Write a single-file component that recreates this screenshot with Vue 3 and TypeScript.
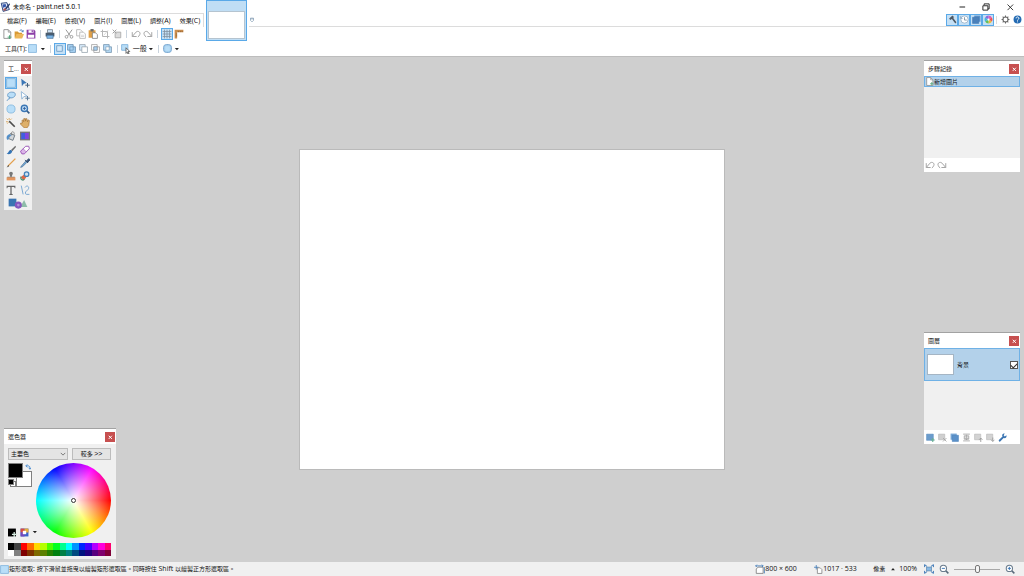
<script setup lang="ts">
import { ref } from 'vue'

interface IconButton {
  icon: string
  label: string
  active?: boolean
}

const blue = '#3b76b5'
const pale = '#b9def8'
const grey = '#a9a9a9'

const fileIcon = (stroke: string) =>
  `<path d="M3 1h7l4 4v10H3z" fill="#fff" stroke="${stroke}" stroke-width="1.4"/><path d="M10 1v4h4" fill="none" stroke="${stroke}" stroke-width="1.2"/>`

const icons: Record<string, string> = {
  app: `<path d="M2 2l9-1 4 11-10 3z" fill="#dfe6f4" stroke="#28427c" stroke-width="1.5"/><path d="M4 4l5-1 1 4-5 2z" fill="#3558ad"/><path d="M15 2L8 10l-2 4 4-2 6-8z" fill="#293a68"/><path d="M5 11l4-1 1 3-4 1z" fill="#b85a52"/>`,
  new: fileIcon('#8c8c8c') + `<path d="M12 10v6M9 13h6" stroke="#55a87c" stroke-width="1.6"/>`,
  open: `<path d="M1 14V4h5l2 2h5v3" fill="#d99a35"/><path d="M4 8h12l-3 7H1z" fill="#edb75a"/><path d="M9 3c2-3 5-1 5 1M12 3l2 2 1-3" fill="none" stroke="${blue}" stroke-width="1.4"/>`,
  save: `<path d="M1 1h12l2 2v12H1z" fill="#8d3fa8"/><path d="M4 2h8v4H4zM3 9h10v5H3z" fill="#fff"/><path d="M9 2h2v3H9z" fill="#8d3fa8"/>`,
  print: `<path d="M4 1h8v5H4z" fill="#cfe4f7" stroke="#55606c"/><path d="M1 6h14v6H1z" fill="#4a5b6d"/><path d="M3 10h10v5H3z" fill="#7cb5e6" stroke="#3e6a94"/>`,
  cut: `<path d="M3 1l7 10M13 1L6 11" stroke="#9b9b9b" stroke-width="1.6"/><g fill="none" stroke="#9b9b9b" stroke-width="1.5"><circle cx="4" cy="12.5" r="2.2"/><circle cx="12" cy="12.5" r="2.2"/></g>`,
  copy: `<g fill="#fff" stroke="#b3b3b3" stroke-width="1.3"><path d="M1 1h6l3 3v7H1z"/><path d="M6 5h6l3 3v7H6z"/></g><path d="M8 10h5M8 12h5" stroke="#c4c4c4"/>`,
  paste: `<path d="M1 2h11v12H1z" fill="#e0a047"/><path d="M4 0h5v4H4z" fill="#6b6b6b"/><path d="M7 6h5l3 3v6H7z" fill="#fff" stroke="#777" stroke-width="1.2"/>`,
  crop: `<path d="M4 1v11h11M1 4h11v11" fill="none" stroke="#b5b5b5" stroke-width="1.6"/><path d="M6 10l7-8" stroke="#c6c6c6"/>`,
  deselect: `<path d="M5 5h9v9H5z" fill="#ddd" stroke="${grey}" stroke-width="1.4"/><path d="M1 1l6 6M7 1L1 7" stroke="#a0a0a0" stroke-width="1.6"/>`,
  undo: `<path d="M2 5v7h7M2 12L8 5c3-3 8 0 6 4-1 2-2 3-3 4" fill="none" stroke="#a0a0a0" stroke-width="1.5"/>`,
  redo: `<path d="M14 5v7H7M14 12L8 5C5 2 0 5 2 9c1 2 2 3 3 4" fill="none" stroke="#a0a0a0" stroke-width="1.5"/>`,
  grid: `<path d="M4 1v14M8 1v14M12 1v14M1 4h14M1 8h14M1 12h14" stroke="#7f8f9e" stroke-width="1.2"/>`,
  ruler: `<path d="M1 1h14v4H5v10H1z" fill="#c98d4e"/><path d="M7 3v2M10 3v2M13 3v2M3 8h2M3 11h2" stroke="#7a4e22"/>`,
  rect: `<path d="M1 1h14v14H1z" fill="${pale}" stroke="#7fb2dc" stroke-width="1.4"/>`,
  replace: `<path d="M3 3h10v10H3z" fill="#d5e9f8" stroke="#6f9fc6" stroke-width="1.6"/>`,
  union: `<path d="M1 1h10v4h4v10H5v-4H1z" fill="#a9d3f4" stroke="#5f87aa" stroke-width="1.3"/><path d="M5 5h6v6H5z" fill="none" stroke="#5f87aa"/>`,
  exclude: `<path d="M1 1h10v10H1z" fill="#d5eafa" stroke="#929da8" stroke-width="1.3"/><path d="M5 5h10v10H5z" fill="#fff" stroke="#929da8" stroke-width="1.3"/>`,
  intersect: `<path d="M1 1h10v10H1zM5 5h10v10H5z" fill="none" stroke="#9a9a9a" stroke-width="1.3"/><path d="M5 5h6v6H5z" fill="#a9d3f4" stroke="#789"/>`,
  invert: `<path d="M1 1h10v4h4v10H5v-4H1z" fill="#b5dbf7" stroke="#7190aa" stroke-width="1.3"/><path d="M5 5h6v6H5z" fill="#fff" stroke="#7190aa"/>`,
  mode: `<path d="M1 1h10v9H1z" fill="${pale}" stroke="#7fb2dc" stroke-width="1.4"/><path d="M8 6l6 6h-3l2 3-2 1-1-3-2 2z" fill="#fff" stroke="#444" stroke-width="1.2"/>`,
  quality: `<rect x="1" y="1" width="14" height="14" rx="5" fill="${pale}" stroke="#6b9dca" stroke-width="1.5"/><path d="M3 3h10v10H3z" fill="none" stroke="#93bfe2"/>`,
  moveSel: `<path d="M2 1l9 7-5 1-3 4z" fill="${blue}"/><path d="M12 8v7M8.5 11.5h7" stroke="#46627f" stroke-width="1.6"/>`,
  lasso: `<path d="M3 9C1 4 6 1 11 2c5 0 5 6 1 8-3 2-6 1-8-1M4 9c3 0 3 4 0 4-2 1-2 2-2 3" fill="${pale}" stroke="#6d9cc5" stroke-width="1.5"/>`,
  movePx: `<path d="M2 1l9 7-5 1-3 4z" fill="#fff" stroke="#7aa5cf" stroke-width="1.2"/><path d="M12 8v7M8.5 11.5h7" stroke="#607e9b" stroke-width="1.6"/>`,
  ellipse: `<circle cx="8" cy="8" r="6.5" fill="${pale}" stroke="#83b6dd" stroke-width="1.3"/>`,
  zoom: `<circle cx="7" cy="7" r="5" fill="#c7e2f7" stroke="${blue}" stroke-width="2.2"/><path d="M11 11l4 4" stroke="#355c88" stroke-width="2.6"/><path d="M7 4.5v5M4.5 7h5" stroke="#28599b" stroke-width="1.4"/>`,
  wand: `<path d="M5 5l9 9" stroke="#4e4e4e" stroke-width="2.6"/><path d="M5 0v3M1 1l2 2M0 6h3M9 1L7 3M2 9l2-2" stroke="#d9a04c" stroke-width="1.4"/>`,
  hand: `<path d="M4 8L3 4l2-1 1 3V1h2l1 4V1h2l1 5 1-3 2 1-1 8-3 4H7L1 10V8z" fill="#deb06a" stroke="#9f6b2d" stroke-width="1"/>`,
  bucket: `<path d="M7 4l7 3-3 8-7-3z" fill="#d2d6da" stroke="#66727d" stroke-width="1.4"/><path d="M2 14C0 10 1 6 6 5l3 3c-4 0-5 2-5 6z" fill="#528fca"/><path d="M9 7V2c2-2 5 0 4 4" fill="none" stroke="#666"/>`,
  gradient: `<path d="M0 1h16v14H0z" fill="#777"/><path d="M2 3h6v10H2z" fill="#405ee0"/><path d="M8 3h6v10H8z" fill="#8144df"/>`,
  brush: `<path d="M15 1L8 8l2 2 6-7z" fill="#6d6d6d"/><path d="M8 8c-4 0-3 4-7 6 4 2 8 0 9-4z" fill="#3474b5"/>`,
  eraser: `<path d="M9 2h5l1 4-8 8H3l-2-4z" fill="#fff" stroke="#9953b5" stroke-width="1.5"/><path d="M5 6l5 5-3 3H3l-2-4z" fill="#dbb5e9" stroke="#9953b5"/>`,
  pencil: `<path d="M15 1L3 13" stroke="#e3a04e" stroke-width="2.2"/><path d="M4 11l-3 4 4-2z" fill="#444"/>`,
  picker: `<path d="M9 5L2 13l-1 2 3-1 7-7z" fill="#72a6d4" stroke="#456c91"/><path d="M8 3l5 5M10 5l4-4 2 2-4 4z" fill="#344f70" stroke="#344f70" stroke-width="1.6"/>`,
  stamp: `<path d="M5 4a3 3 0 116 0L9 9h5v3H2V9h5z" fill="#777"/><path d="M1 10h14v5H1z" fill="#e3965f"/>`,
  recolor: `<path d="M1 10l5-4 4 4-4 5z" fill="#dd6848"/><path d="M2 9a3 3 0 105 4" fill="none" stroke="#4a9274" stroke-width="2"/><circle cx="10.5" cy="5" r="3.6" fill="#cfe3f3" stroke="#4383ba" stroke-width="2"/>`,
  text: `<path d="M1 1h14v4h-1l-1-2H9v11l2 1v1H5v-1l2-1V3H3L2 5H1z" fill="#666"/>`,
  line: `<path d="M2 1l3 14M8 4c3-5 8-1 5 3l-4 4c-1 3 0 4 2 4h4" fill="none" stroke="#76a5d1" stroke-width="1.5"/>`,
  shapes: `<path d="M1 1h12v12H1z" fill="#3a75b2"/><path d="M25 3l5 11H19z" fill="#8ebca9"/><circle cx="16" cy="11" r="5.5" fill="#8656bd"/><circle cx="16" cy="11" r="2" fill="#b293d9"/>`,
  hammer: `<path d="M2 6l6-5 3 3-2 1 6 8-2 2-6-8-3 2z" fill="#4d5965"/>`,
  clock: `<circle cx="8" cy="8" r="6.5" fill="#fff" stroke="#92acc4" stroke-width="1.4"/><path d="M8 4v5h4" fill="none" stroke="#6b8296" stroke-width="1.4"/><path d="M1 2v4h4" fill="none" stroke="#7b98b2"/>`,
  layers: `<path d="M4 1h11v11H4z" fill="#5b91c9"/><path d="M1 4h11v11H1z" fill="#4a80ba" stroke="#4176ae"/>`,
  duplicate: `<path d="M1 1h11v11H1z" fill="#7ba9d6"/><path d="M4 4h11v11H4z" fill="#5b91c9" stroke="#4a80ba"/>`,
  palette: `<path d="M8 8V1a7 7 0 016 3.5z" fill="#e45ab7"/><path d="M8 8l6-3.5a7 7 0 010 7z" fill="#ee5555"/><path d="M8 8l6 3.5A7 7 0 018 15z" fill="#f0bb3c"/><path d="M8 8v7a7 7 0 01-6-3.5z" fill="#66bf58"/><path d="M8 8l-6 3.5a7 7 0 010-7z" fill="#46b6d8"/><path d="M8 8L2 4.5A7 7 0 018 1z" fill="#876be0"/><circle cx="8" cy="8" r="2" fill="#fff"/>`,
  gear: `<circle cx="8" cy="8" r="4.5" fill="none" stroke="#666" stroke-width="1.8"/><path d="M8 1v3M8 12v3M1 8h3M12 8h3M3 3l2 2M11 11l2 2M3 13l2-2M11 5l2-2" stroke="#666" stroke-width="1.8"/>`,
  help: `<circle cx="8" cy="8" r="7" fill="#246bb3"/><path d="M5.5 6c0-4 5-3 5 0 0 2-2.5 1.5-2.5 4M8 11.5V13" fill="none" stroke="#fff" stroke-width="1.7"/>`,
  minimize: `<path d="M4 8h9" stroke="#222" stroke-width="1.6"/>`,
  restore: `<path d="M3 6h8v7H3z" fill="none" stroke="#222" stroke-width="1.5"/><path d="M5 5V3h8v8h-2" fill="none" stroke="#222" stroke-width="1.5"/>`,
  close: `<path d="M4 4l9 9M13 4l-9 9" stroke="#222" stroke-width="1.4"/>`,
  closeSmall: `<path d="M6 6l5 5M11 6l-5 5" stroke="#fff" stroke-width="1.6"/>`,
  caret: `<path d="M2 5h11l-5 6z" fill="#222"/>`,
  caretUp: `<path d="M3 11h10L8 5z" fill="#222"/>`,
  listCaret: `<path d="M4 3h8v6l-4 4-4-4z" fill="#fff" stroke="#7893ad" stroke-width="1.8"/><path d="M4 5h8" stroke="#7893ad" stroke-width="1.8"/>`,
  chevron: `<path d="M2 5l6 6 6-6" fill="none" stroke="#555" stroke-width="2"/>`,
  swap: `<path d="M3 5h6c3 0 4 2 4 7M6 1L2 5l4 4M10 10l3 4 3-4" fill="none" stroke="#3f86cf" stroke-width="2.4"/>`,
  addColor: `<path d="M0 1h14v14H0z" fill="#000"/><path d="M11 7v9M7 11.5h9" stroke="#d9eee3" stroke-width="2.2"/>`,
  paletteMenu: `<path d="M1 1h14v14H1z" fill="#3c62cb"/><path d="M1 1h7v7H1z" fill="#d94c42"/><path d="M8 1h7v7H8z" fill="#e7ad38"/><path d="M1 8h7v7H1z" fill="#7648bb"/><path d="M5 5h6v6H5z" fill="#fff"/>`,
  layerAdd: `<path d="M1 2h12v11H1z" fill="#6b9ccc" stroke="#5a8dc0"/><path d="M12 9v7M8.5 12.5h7" stroke="#69b094" stroke-width="2"/>`,
  layerDelete: `<path d="M1 2h11v10H1z" fill="#cfcfcf" stroke="#b4b4b4"/><path d="M9 9l6 6M15 9l-6 6" stroke="#a2a2a2" stroke-width="1.5"/>`,
  layerMerge: `<path d="M2 2h12M2 14h12M4 5h8v6H4z" fill="#ddd" stroke="#adadad" stroke-width="1.7"/><path d="M8 3v9M5 9l3 3 3-3" fill="none" stroke="#999"/>`,
  layerUp: `<path d="M1 2h11v10H1z" fill="#d3d3d3" stroke="#b4b4b4"/><path d="M12 16V9M9 12l3-3 3 3" fill="none" stroke="#999" stroke-width="1.5"/>`,
  layerDown: `<path d="M1 2h11v10H1z" fill="#d3d3d3" stroke="#b4b4b4"/><path d="M12 8v7M9 12l3 3 3-3" fill="none" stroke="#999" stroke-width="1.5"/>`,
  wrench: `<path d="M15 4l-3 2-2-2 2-3C9 0 6 3 8 6l-7 7 2 3 7-7c4 1 6-2 5-5z" fill="#3b75b2"/>`,
  imageSize: `<path d="M5 5h8v10H2V8z" fill="#fff" stroke="#777" stroke-width="1.3"/><path d="M1 3h12M3 1L1 3l2 2M11 1l2 2-2 2M15 5v10" fill="none" stroke="${blue}" stroke-width="1.3"/>`,
  cursorPos: `<path d="M6 5h5l3 3v7H6z" fill="#fff" stroke="#777" stroke-width="1.3"/><path d="M4 0v8M0 4h8" stroke="${blue}" stroke-width="1.4"/>`,
  fit: `<path d="M4 5h8v6H4z" fill="#88b9e3" stroke="#4c7dab"/><path d="M1 5V1l4 3M15 5V1l-4 3M1 11v4l4-3M15 11v4l-4-3" fill="none" stroke="${blue}" stroke-width="1.6"/>`,
  zoomOut: `<circle cx="7" cy="7" r="5" fill="#fff" stroke="#697b8c" stroke-width="1.7"/><path d="M11 11l4 4" stroke="#596a7a" stroke-width="2.3"/><path d="M4.5 7h5" stroke="${blue}" stroke-width="1.5"/>`,
  zoomIn: `<circle cx="7" cy="7" r="5" fill="#fff" stroke="#697b8c" stroke-width="1.7"/><path d="M11 11l4 4" stroke="#596a7a" stroke-width="2.3"/><path d="M4.5 7h5M7 4.5v5" stroke="${blue}" stroke-width="1.5"/>`,
  historyNew: fileIcon('#8c8c8c') + `<path d="M12 9v6M9 12h6" stroke="#55a87c" stroke-width="1.5"/>`,
}

const menus = [
  { name: '檔案', key: 'F' },
  { name: '編輯', key: 'E' },
  { name: '檢視', key: 'V' },
  { name: '圖片', key: 'I' },
  { name: '圖層', key: 'L' },
  { name: '調整', key: 'A' },
  { name: '效果', key: 'C' },
]

const toolbarGroups: IconButton[][] = [
  [
    { icon: 'new', label: '新增' },
    { icon: 'open', label: '開啟' },
    { icon: 'save', label: '儲存' },
  ],
  [{ icon: 'print', label: '列印' }],
  [
    { icon: 'cut', label: '剪下' },
    { icon: 'copy', label: '複製' },
    { icon: 'paste', label: '貼上' },
    { icon: 'crop', label: '裁剪' },
    { icon: 'deselect', label: '取消選取' },
  ],
  [
    { icon: 'undo', label: '復原' },
    { icon: 'redo', label: '重做' },
  ],
  [
    { icon: 'grid', label: '格線', active: true },
    { icon: 'ruler', label: '尺規' },
  ],
]

const selectionModes: IconButton[] = [
  { icon: 'replace', label: '取代', active: true },
  { icon: 'union', label: '加入' },
  { icon: 'exclude', label: '減去' },
  { icon: 'intersect', label: '交集' },
  { icon: 'invert', label: '反轉' },
]

const windowToggles: IconButton[] = [
  { icon: 'hammer', label: '工具' },
  { icon: 'clock', label: '步驟記錄' },
  { icon: 'layers', label: '圖層' },
  { icon: 'palette', label: '選色器' },
]

const tools: IconButton[] = [
  { icon: 'rect', label: '矩形選取' },
  { icon: 'moveSel', label: '移動像素' },
  { icon: 'lasso', label: '套索選取' },
  { icon: 'movePx', label: '移動選取' },
  { icon: 'ellipse', label: '橢圓選取' },
  { icon: 'zoom', label: '縮放' },
  { icon: 'wand', label: '魔術棒' },
  { icon: 'hand', label: '平移' },
  { icon: 'bucket', label: '油漆桶' },
  { icon: 'gradient', label: '漸層' },
  { icon: 'brush', label: '筆刷' },
  { icon: 'eraser', label: '橡皮擦' },
  { icon: 'pencil', label: '鉛筆' },
  { icon: 'picker', label: '滴管' },
  { icon: 'stamp', label: '仿製印章' },
  { icon: 'recolor', label: '重新著色' },
  { icon: 'text', label: '文字' },
  { icon: 'line', label: '線條' },
]
const activeTool = ref('rect')

const layerActions: IconButton[] = [
  { icon: 'layerAdd', label: '新增圖層' },
  { icon: 'layerDelete', label: '刪除圖層' },
  { icon: 'duplicate', label: '複製圖層' },
  { icon: 'layerMerge', label: '向下合併' },
  { icon: 'layerUp', label: '上移' },
  { icon: 'layerDown', label: '下移' },
  { icon: 'wrench', label: '圖層屬性' },
]

const swatches = [
  '#000000', '#404040', '#ff0000', '#ff6a00', '#ffd800', '#b6ff00', '#4cff00', '#00ff21',
  '#00ff90', '#00ffff', '#0094ff', '#0026ff', '#4800ff', '#b200ff', '#ff00dc', '#ff006e',
  '#ffffff', '#808080', '#7f0000', '#7f3300', '#7f6a00', '#5b7f00', '#267f00', '#007f0e',
  '#007f46', '#007f7f', '#004a7f', '#00137f', '#21007f', '#57007f', '#7f006e', '#7f0037',
]

const layerVisible = ref(true)
const zoomLevel = ref(50)
const colorTarget = ref('primary')
</script>

<template>
  <div class="app" lang="zh-Hant">
    <header class="top">
      <div class="title">
        <svg class="icon" viewBox="0 0 16 16" v-html="icons.app" />
        <h1>未命名<span> - paint.net 5.0.1</span></h1>
      </div>
      <nav class="menu">
        <button v-for="m in menus" :key="m.key" type="button">{{ m.name }}<span>({{ m.key }})</span></button>
      </nav>
      <div class="toolbar">
        <div v-for="(group, g) in toolbarGroups" :key="g" class="group">
          <button v-for="b in group" :key="b.icon" type="button" class="tool" :class="{ active: b.active }" :aria-label="b.label">
            <svg class="icon" viewBox="0 0 16 16" v-html="icons[b.icon]" />
          </button>
        </div>
      </div>
      <button type="button" class="doc-thumb" aria-label="未命名"><span /></button>
      <div class="window-buttons">
        <button type="button" aria-label="最小化"><svg class="icon" viewBox="0 0 16 16" v-html="icons.minimize" /></button>
        <button type="button" aria-label="還原"><svg class="icon" viewBox="0 0 16 16" v-html="icons.restore" /></button>
        <button type="button" aria-label="關閉"><svg class="icon" viewBox="0 0 16 16" v-html="icons.close" /></button>
      </div>
      <div class="right-menu">
        <button type="button" class="list-caret" aria-label="圖片清單"><svg class="icon mini" viewBox="0 0 16 16" v-html="icons.listCaret" /></button>
        <button v-for="b in windowToggles" :key="b.icon" type="button" class="tool active" :aria-label="b.label">
          <svg class="icon small" viewBox="0 0 16 16" v-html="icons[b.icon]" />
        </button>
        <span class="divider" />
        <button type="button" class="tool" aria-label="設定"><svg class="icon small" viewBox="0 0 16 16" v-html="icons.gear" /></button>
        <button type="button" class="tool" aria-label="說明"><svg class="icon small" viewBox="0 0 16 16" v-html="icons.help" /></button>
      </div>
    </header>

    <div class="options">
      <span class="options-label">工具<span>(T):</span></span>
      <button type="button" class="tool" aria-label="矩形選取"><svg class="icon small" viewBox="0 0 16 16" v-html="icons.rect" /></button>
      <svg class="icon mini caret" viewBox="0 0 16 16" v-html="icons.caret" />
      <div class="group">
        <button v-for="b in selectionModes" :key="b.icon" type="button" class="tool" :class="{ active: b.active }" :aria-label="b.label">
          <svg class="icon small" viewBox="0 0 16 16" v-html="icons[b.icon]" />
        </button>
      </div>
      <div class="group">
        <button type="button" class="mode"><svg class="icon" viewBox="0 0 16 16" v-html="icons.mode" />一般</button>
        <svg class="icon mini caret" viewBox="0 0 16 16" v-html="icons.caret" />
      </div>
      <div class="group">
        <button type="button" class="tool" aria-label="品質"><svg class="icon small" viewBox="0 0 16 16" v-html="icons.quality" /></button>
        <svg class="icon mini" viewBox="0 0 16 16" v-html="icons.caret" />
      </div>
    </div>

    <main class="workspace">
      <div class="canvas" />

      <section class="panel tools-panel" aria-label="工具">
        <div class="panel-head">
          <h2>工...</h2>
          <button type="button" class="close" aria-label="關閉"><svg class="icon" viewBox="0 0 16 16" v-html="icons.closeSmall" /></button>
        </div>
        <div class="tool-grid">
          <button v-for="t in tools" :key="t.icon" type="button" class="tool" :class="{ active: activeTool === t.icon }" :aria-label="t.label" @click="activeTool = t.icon">
            <svg class="icon" viewBox="0 0 16 16" v-html="icons[t.icon]" />
          </button>
          <button type="button" class="tool wide" aria-label="圖形"><svg viewBox="0 0 31 17" v-html="icons.shapes" /></button>
        </div>
      </section>

      <section class="panel history-panel" aria-label="步驟記錄">
        <div class="panel-head">
          <h2>步驟記錄</h2>
          <button type="button" class="close" aria-label="關閉"><svg class="icon" viewBox="0 0 16 16" v-html="icons.closeSmall" /></button>
        </div>
        <ul class="list">
          <li class="history-item"><svg class="icon small" viewBox="0 0 16 16" v-html="icons.historyNew" />新增圖片</li>
        </ul>
        <div class="panel-foot">
          <button type="button" class="tool" aria-label="復原"><svg class="icon" viewBox="0 0 16 16" v-html="icons.undo" /></button>
          <button type="button" class="tool" aria-label="重做"><svg class="icon" viewBox="0 0 16 16" v-html="icons.redo" /></button>
        </div>
      </section>

      <section class="panel layers-panel" aria-label="圖層">
        <div class="panel-head">
          <h2>圖層</h2>
          <button type="button" class="close" aria-label="關閉"><svg class="icon" viewBox="0 0 16 16" v-html="icons.closeSmall" /></button>
        </div>
        <ul class="list">
          <li class="layer-item">
            <span class="layer-thumb" />
            <label for="layer-visible">背景</label>
            <input id="layer-visible" v-model="layerVisible" type="checkbox">
          </li>
        </ul>
        <div class="panel-foot">
          <button v-for="b in layerActions" :key="b.icon" type="button" class="tool" :aria-label="b.label">
            <svg class="icon small" viewBox="0 0 16 16" v-html="icons[b.icon]" />
          </button>
        </div>
      </section>

      <section class="panel colors-panel" aria-label="選色器">
        <div class="panel-head">
          <h2>選色器</h2>
          <button type="button" class="close" aria-label="關閉"><svg class="icon" viewBox="0 0 16 16" v-html="icons.closeSmall" /></button>
        </div>
        <div class="colors-body">
          <div class="colors-top">
            <div class="select-wrap">
              <select v-model="colorTarget" aria-label="色彩">
                <option value="primary">主要色</option>
                <option value="secondary">次要色</option>
              </select>
              <svg class="icon mini select-arrow" viewBox="0 0 16 16" v-html="icons.chevron" />
            </div>
            <button type="button" class="more">較多 <span>&gt;&gt;</span></button>
          </div>
          <div class="colors-mid">
            <div class="colors-side">
              <div class="pair">
                <span class="chip secondary" />
                <span class="chip primary" />
                <span class="chip reset-back" />
                <span class="chip reset-front" />
                <svg class="icon mini swap" viewBox="0 0 16 16" v-html="icons.swap" />
              </div>
              <div class="palette-actions">
                <button type="button" class="tool" aria-label="新增色彩"><svg class="icon small" viewBox="0 0 16 16" v-html="icons.addColor" /></button>
                <button type="button" class="tool" aria-label="調色盤"><svg class="icon small" viewBox="0 0 16 16" v-html="icons.paletteMenu" /></button>
                <svg class="icon mini" viewBox="0 0 16 16" v-html="icons.caret" />
              </div>
            </div>
            <div class="wheel"><span class="wheel-pointer" /></div>
          </div>
          <div class="palette">
            <button v-for="c in swatches" :key="c" type="button" :style="{ backgroundColor: c }" :aria-label="c" />
          </div>
        </div>
      </section>
    </main>

    <footer class="status">
      <svg class="icon small" viewBox="0 0 16 16" v-html="icons.rect" />
      <p class="hint">矩形選取<span>: </span>按下滑鼠並拖曳以繪製矩形選取區。同時按住<span> Shift </span>以繪製正方形選取區。</p>
      <div class="stat"><svg class="icon" viewBox="0 0 16 16" v-html="icons.imageSize" />800 × 600</div>
      <div class="stat"><svg class="icon small" viewBox="0 0 16 16" v-html="icons.cursorPos" />1017 · 533</div>
      <button type="button" class="unit">像素<svg class="icon mini" viewBox="0 0 16 16" v-html="icons.caretUp" /></button>
      <span class="percent">100%</span>
      <button type="button" class="tool fit" aria-label="符合視窗"><svg class="icon" viewBox="0 0 16 16" v-html="icons.fit" /></button>
      <button type="button" class="tool" aria-label="縮小"><svg class="icon" viewBox="0 0 16 16" v-html="icons.zoomOut" /></button>
      <input v-model="zoomLevel" type="range" min="0" max="100" aria-label="縮放">
      <button type="button" class="tool" aria-label="放大"><svg class="icon" viewBox="0 0 16 16" v-html="icons.zoomIn" /></button>
    </footer>
  </div>
</template>

<style>
body {
  margin: 0;
}
</style>

<style scoped>
* {
  box-sizing: border-box;
}

.app {
  display: flex;
  flex-direction: column;
  height: 100vh;
  overflow: hidden;
  background: #cfcfcf;
  color: #111;
  font-family: "Open Sans", "Noto Sans CJK TC", sans-serif;
  font-size: 6px;
  line-height: 10px;
}

button,
select,
input {
  margin: 0;
  padding: 0;
  border: 0;
  background: none;
  color: inherit;
  font: inherit;
}

h1,
h2,
p,
ul {
  margin: 0;
  padding: 0;
  font-size: inherit;
  font-weight: 400;
  list-style: none;
}

.icon {
  flex: none;
  display: block;
  width: 10px;
  height: 10px;
}

.icon.small {
  width: 9px;
  height: 9px;
}

.icon.mini {
  width: 6px;
  height: 6px;
}

.tool {
  display: flex;
  flex: none;
  align-items: center;
  justify-content: center;
  width: 12px;
  height: 12px;
}

.tool.active {
  border: 1px solid #5aa9e8;
  background: #c5e0f5;
}

.top {
  display: grid;
  grid-template-columns: 204px 45px 1fr;
  grid-template-rows: 13px 14px 14px;
  flex: none;
  background: #fff;
}

.title {
  display: flex;
  grid-area: 1 / 1;
  align-items: center;
  gap: 3px;
}

.title h1 {
  font-family: Roboto, "Noto Sans CJK TC", sans-serif;
  white-space: nowrap;
}

.menu {
  display: flex;
  grid-area: 2 / 1;
  align-items: center;
  gap: 9px;
  padding-left: 7px;
  border-top: 1px solid #dcdcdc;
  border-right: 1px solid #dcdcdc;
}

.menu button,
.options-label {
  white-space: nowrap;
}

.title span,
.menu span,
.options-label span,
.more span,
.hint span {
  font-size: 7px;
}

.more span {
  font-family: "Liberation Sans", sans-serif;
}

.toolbar {
  display: flex;
  grid-area: 3 / 1;
  align-items: center;
  padding-left: 1px;
}

.group {
  display: flex;
  align-items: center;
}

.group + .group::before,
.caret + .group::before {
  content: "";
  width: 1px;
  height: 8px;
  margin: 0 3px;
  background: #c9d3dd;
}

.doc-thumb {
  display: flex;
  grid-area: 1 / 2 / 4 / 3;
  margin: 0 2px;
  padding: 10px 1px 1px;
  border: 1px solid #5aa9e8;
  background: #c0def5;
}

.doc-thumb span {
  flex: 1;
  border: 1px solid #b5c4d0;
  background: #fff;
}

.window-buttons {
  display: flex;
  grid-area: 1 / 3;
  align-items: center;
  justify-content: flex-end;
  gap: 14px;
  padding-right: 9px;
}

.right-menu {
  display: flex;
  grid-area: 2 / 3;
  align-items: center;
  padding-right: 1px;
  border-bottom: 1px solid #dcdcdc;
}

.list-caret {
  margin-right: auto;
}

.divider {
  width: 1px;
  height: 8px;
  margin: 0 2px;
  background: #dcdcdc;
}

.options {
  display: flex;
  flex: none;
  align-items: center;
  height: 15px;
  padding-left: 5px;
  background: #fff;
}

.options .caret {
  margin: 0 1px;
}

.mode {
  display: flex;
  align-items: center;
  gap: 2px;
  font-size: 7px;
}

.workspace {
  position: relative;
  display: flex;
  flex: 1;
  align-items: center;
  justify-content: center;
  min-height: 0;
  border-top: 1px solid #bdbdbd;
}

.canvas {
  height: 63%;
  aspect-ratio: 4 / 3;
  background: #fff;
  outline: 1px solid #bababa;
}

.panel {
  position: absolute;
  display: flex;
  flex-direction: column;
  border-top: 1px solid #a2a2a2;
  background: #f0f0f0;
}

.panel-head {
  display: flex;
  align-items: center;
  justify-content: space-between;
  height: 15px;
  padding: 0 1px 0 4px;
  background: #fff;
}

.close {
  display: flex;
  align-items: center;
  justify-content: center;
  width: 10px;
  height: 10px;
  background: #c75050;
}

.tools-panel {
  top: 3px;
  left: 4px;
  width: 28px;
}

.tool-grid {
  display: grid;
  grid-template-columns: 1fr 1fr;
  grid-auto-rows: 1fr;
  place-items: center;
  height: 134px;
}

.tool.wide {
  grid-column: span 2;
  width: 20px;
}

.tool.wide svg {
  width: 20px;
  height: 11px;
}

.list {
  flex: 1;
}

.history-panel,
.layers-panel {
  right: 4px;
  width: 96px;
}

.history-panel {
  top: 3px;
  height: 112px;
}

.layers-panel {
  bottom: 118px;
  height: 112px;
}

.history-item,
.layer-item {
  display: flex;
  align-items: center;
  border: 1px solid #6fb1e6;
  background: #b3d1ea;
}

.history-item {
  height: 11px;
}

.layer-item {
  gap: 3px;
  height: 33px;
  padding: 0 1px 0 2px;
}

.layer-thumb {
  width: 27px;
  height: 21px;
  border: 1px solid #a5b5c4;
  background: #fff;
}

.layer-item label {
  flex: 1;
}

.layer-item input {
  display: flex;
  align-items: center;
  justify-content: center;
  width: 8px;
  height: 8px;
  border: 1px solid #555;
  background: #fff;
  appearance: none;
}

.layer-item input:checked::before {
  content: "";
  width: 5px;
  height: 3px;
  border-bottom: 1px solid #333;
  border-left: 1px solid #333;
  transform: rotate(-45deg);
}

.panel-foot {
  display: flex;
  align-items: center;
  height: 14px;
  background: #fff;
}

.colors-panel {
  bottom: 3px;
  left: 4px;
  width: 112px;
}

.colors-body {
  padding: 4px 5px 3px 4px;
}

.colors-top {
  display: flex;
  gap: 4px;
}

.select-wrap {
  position: relative;
  width: 60px;
}

.select-wrap select {
  display: block;
  width: 100%;
  height: 12px;
  padding: 0 2px;
  border: 1px solid #bcbcbc;
  background: #e4e4e4;
  appearance: none;
}

.select-arrow {
  position: absolute;
  top: 3px;
  right: 2px;
  pointer-events: none;
}

.more {
  flex: 1;
  height: 12px;
  border: 1px solid #bcbcbc;
  background: #e4e4e4;
}

.colors-mid {
  display: flex;
  justify-content: space-between;
  margin: 3px 0 5px;
}

.colors-side {
  display: flex;
  flex: 1;
  flex-direction: column;
  justify-content: space-between;
  min-width: 0;
}

.pair {
  position: relative;
  width: 24px;
  height: 24px;
}

.chip {
  position: absolute;
  border: 1px solid #808080;
  background: #fff;
}

.chip.primary {
  top: 0;
  left: 0;
  width: 15px;
  height: 15px;
  background: #000;
}

.chip.secondary {
  right: 0;
  bottom: 0;
  width: 16px;
  height: 16px;
}

.chip.reset-front {
  top: 16px;
  left: 0;
  width: 6px;
  height: 6px;
  background: #000;
}

.chip.reset-back {
  top: 18px;
  left: 2px;
  width: 6px;
  height: 6px;
}

.swap {
  position: absolute;
  top: 1px;
  right: 1px;
}

.palette-actions {
  display: flex;
  align-items: center;
}

.palette-actions .tool {
  justify-content: flex-start;
}

.wheel {
  display: flex;
  flex: none;
  align-items: center;
  justify-content: center;
  width: 75px;
  height: 75px;
  border-radius: 50%;
  background:
    radial-gradient(closest-side, #fff, transparent),
    conic-gradient(from 90deg, #f00, #ff0, #0f0, #0ff, #00f, #f0f, #f00);
}

.wheel-pointer {
  width: 5px;
  height: 5px;
  border: 1px solid #333;
  border-radius: 50%;
  background: #fff;
}

.palette {
  display: grid;
  grid-template-columns: repeat(16, 1fr);
  grid-auto-rows: 1fr;
  height: 13px;
}

.status {
  display: flex;
  flex: none;
  align-items: center;
  height: 14px;
  padding-right: 8px;
  background: #f0f0f0;
}

.status .hint {
  flex: 1;
  white-space: nowrap;
}

.hint span,
.title span {
  white-space: pre;
}

.stat,
.unit,
.percent {
  display: flex;
  align-items: center;
  font-size: 7px;
}

.stat {
  width: 59px;
}

.unit {
  gap: 5px;
  width: 26px;
  font-size: 6px;
}

.fit {
  margin: 0 3px 0 6px;
}

.status input {
  width: 46px;
  height: 10px;
  margin: 0 4px;
  background: linear-gradient(#a8a8a8, #a8a8a8) center / 100% 1px no-repeat;
  appearance: none;
}

.status input::-webkit-slider-thumb {
  width: 5px;
  height: 8px;
  border: 1px solid #777;
  border-radius: 2px;
  background: #f5f5f5;
  appearance: none;
}
</style>
